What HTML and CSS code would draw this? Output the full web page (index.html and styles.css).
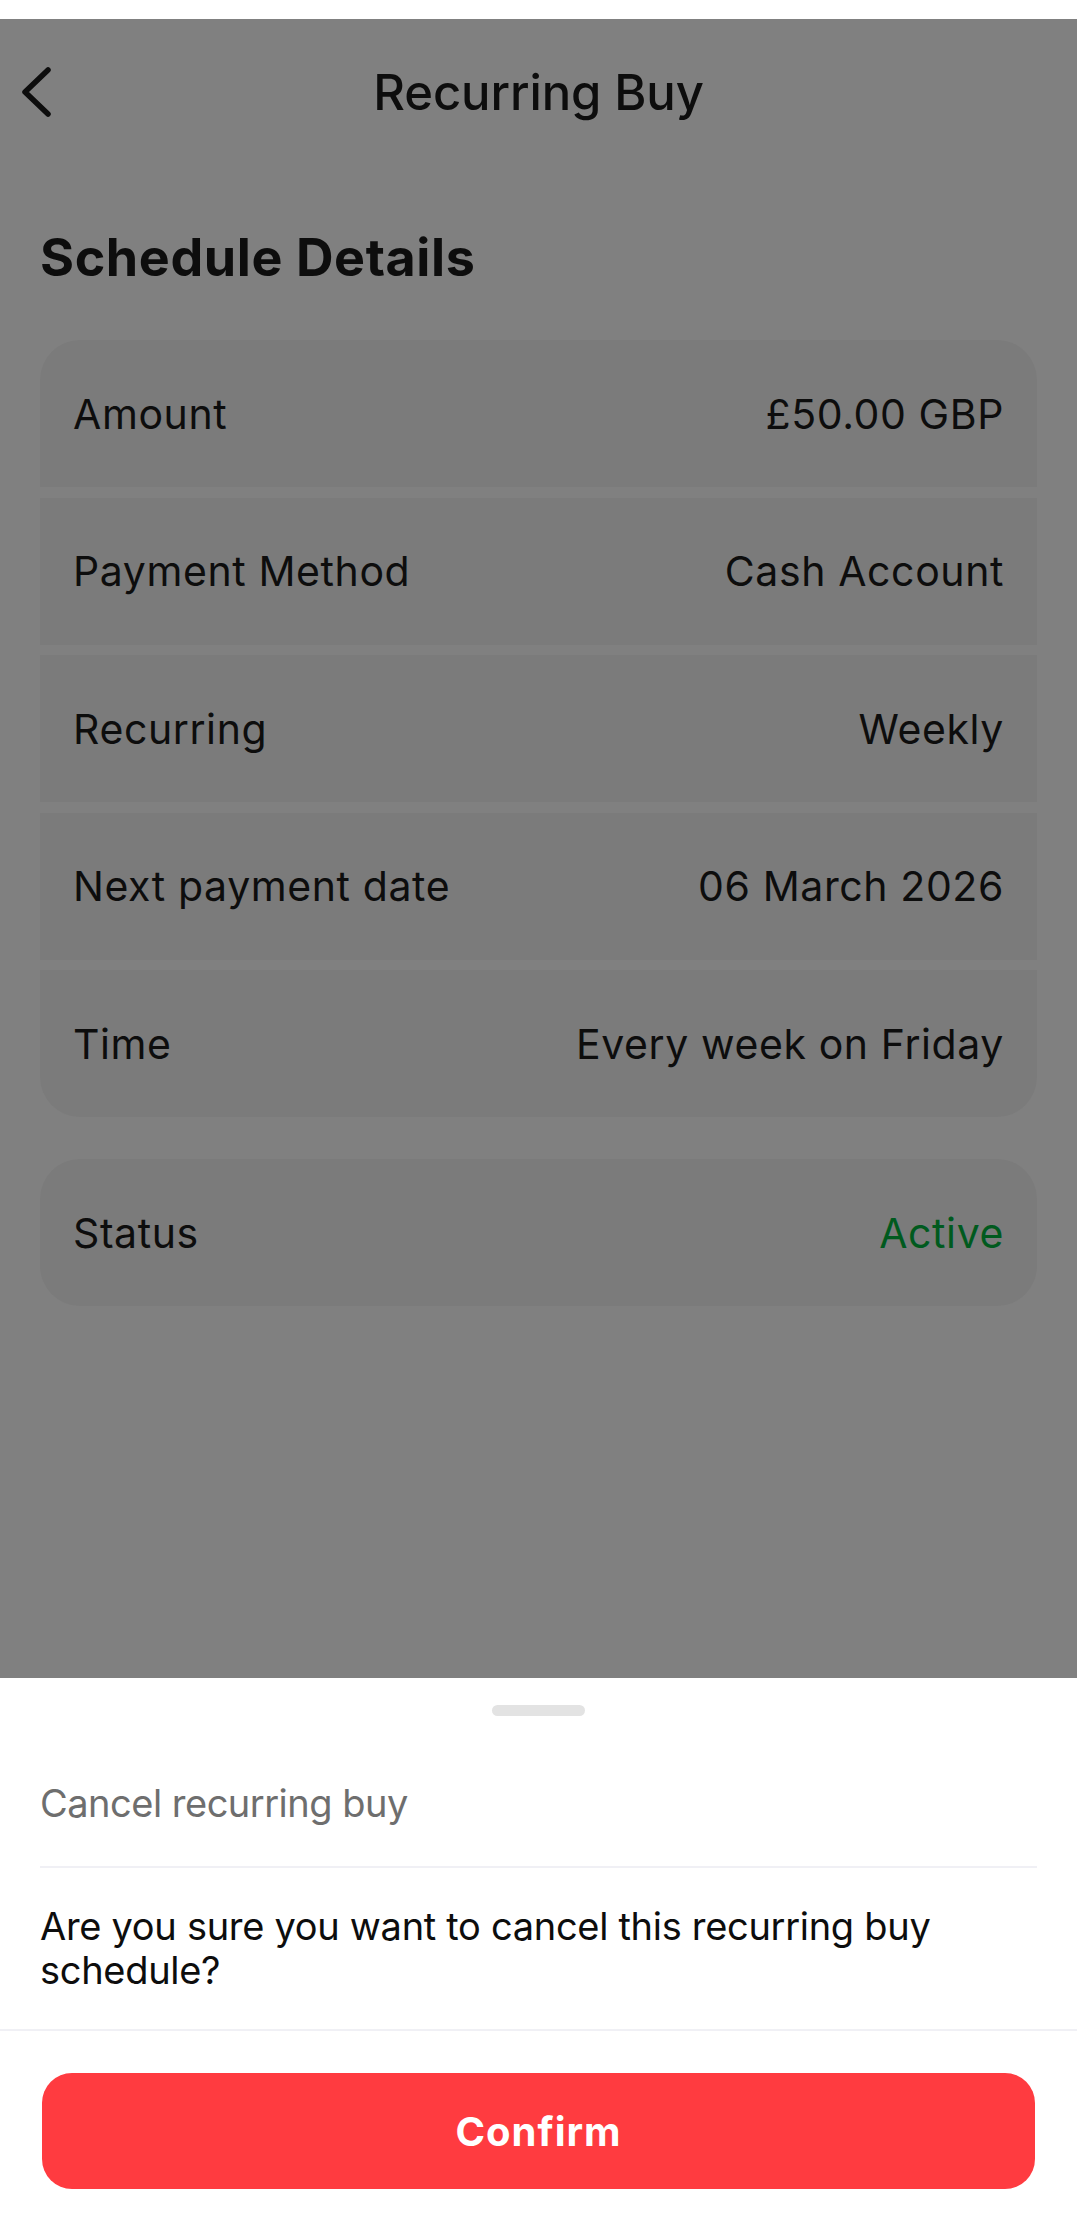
FILE: index.html
```html
<!DOCTYPE html>
<html lang="en">
<head>
  <meta charset="UTF-8">
  <meta name="viewport" content="width=device-width, initial-scale=1.0">
  <title>Recurring Buy</title>
  <link rel="stylesheet" href="styles.css">
</head>
<body>
  <div class="page">
    <div class="status-bar"></div>

    <!-- dimmed screen behind the sheet -->
    <div class="backdrop">
      <header class="top-bar">
        <button class="back-btn" aria-label="Back">
          <svg width="32" height="52" viewBox="0 0 32 52">
            <polyline points="28,4 5,26 28,48" fill="none" stroke="#0d0d0d" stroke-width="5.5" stroke-linecap="round" stroke-linejoin="round"/>
          </svg>
        </button>
        <h1>Recurring Buy</h1>
        <span></span>
      </header>

      <h2 class="section-title">Schedule Details</h2>

      <div class="detail-group">
        <div class="detail-row"><span>Amount</span><span>£50.00 GBP</span></div>
        <div class="detail-row"><span>Payment Method</span><span>Cash Account</span></div>
        <div class="detail-row"><span>Recurring</span><span>Weekly</span></div>
        <div class="detail-row"><span>Next payment date</span><span>06 March 2026</span></div>
        <div class="detail-row"><span>Time</span><span>Every week on Friday</span></div>
      </div>

      <div class="detail-group status-group">
        <div class="detail-row"><span>Status</span><span class="active">Active</span></div>
      </div>
    </div>

    <!-- Cancel confirmation sheet -->
    <div class="sheet">
      <div class="handle"></div>
      <p class="sheet-title">Cancel recurring buy</p>
      <p class="sheet-text">Are you sure you want to cancel this recurring buy schedule?</p>
      <div class="sheet-footer">
        <button class="confirm-btn">Confirm</button>
      </div>
    </div>
  </div>
</body>
</html>
```

FILE: styles.css
```css
body {
  margin: 0;
  font-family: Inter, "Noto Sans", sans-serif;
  background-color: #fff;
  color: #0d0d0d;
}
.page {
  display: flex;
  flex-direction: column;
  min-height: 2222px;
}
.status-bar {
  height: 19px;
  background-color: #fff;
}
.backdrop {
  flex: 1;
  background-color: #808080;
  padding: 0 40px;
}
.top-bar {
  display: grid;
  grid-template-columns: 1fr auto 1fr;
  align-items: center;
  height: 146px;
  margin: 0 -40px;
  padding: 0 20px;
}
.back-btn {
  justify-self: start;
  display: flex;
  padding: 0;
  border: none;
  background: none;
}
.top-bar h1 {
  margin: 0;
  font-size: 49px;
  font-weight: 500;
  letter-spacing: -0.1px;
}
.section-title {
  margin: 62px 0 51px;
  font-size: 52px;
  line-height: 62px;
  font-weight: 700;
  letter-spacing: 0.6px;
}
.detail-group {
  display: flex;
  flex-direction: column;
  gap: 10.5px;
}
.detail-row {
  display: flex;
  justify-content: space-between;
  align-items: center;
  height: 147px;
  padding: 0 33px;
  background-color: #7b7b7b;
  font-size: 41px;
  letter-spacing: 0.6px;
}
.detail-group .detail-row:first-child {
  border-radius: 40px 40px 0 0;
}
.detail-group .detail-row:last-child {
  border-radius: 0 0 40px 40px;
}
.status-group {
  margin-top: 42px;
}
.status-group .detail-row:only-child {
  border-radius: 40px;
}
.active {
  color: #005a1e;
}
.sheet {
  background-color: #fff;
  display: flex;
  flex-direction: column;
}
.handle {
  width: 93px;
  height: 11px;
  margin: 27px auto 0;
  border-radius: 6px;
  background-color: #e3e3e3;
}
.sheet-title {
  margin: 65px 40px 0;
  padding-bottom: 41px;
  border-bottom: 2px solid #f0f0f5;
  font-size: 38px;
  line-height: 44px;
  letter-spacing: -0.5px;
  color: #6e6e6e;
}
.sheet-text {
  margin: 0;
  padding: 36px 40px 37px;
  border-bottom: 2px solid #f0f0f5;
  font-size: 38px;
  line-height: 44px;
  letter-spacing: -0.3px;
}
.sheet-footer {
  padding: 42px 42px 33px;
}
.confirm-btn {
  width: 100%;
  height: 116px;
  border: none;
  border-radius: 30px;
  background-color: #ff3b40;
  color: #fff;
  font-family: Inter, "Noto Sans", sans-serif;
  font-size: 40px;
  font-weight: 700;
  letter-spacing: 1px;
}
```
